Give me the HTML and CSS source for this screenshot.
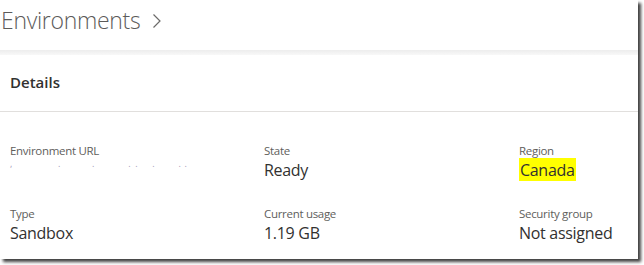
FILE: index.html
```html
<!DOCTYPE html>
<html>
<head>
<meta charset="utf-8">
<link rel="stylesheet" href="styles.css">
</head>
<body>
<div class="frame">
  <header class="header">
    <h1 class="title">Environments<svg class="chev" width="10" height="16" viewBox="0 0 10 16"><polyline points="1.5,1.5 8,8 1.5,14.5" fill="none" stroke="#6b6a69" stroke-width="1.2"/></svg></h1>
  </header>
  <div class="band"></div>
  <section class="card">
    <h2 class="card-title">Details</h2>
    <div class="grid">
      <div class="field">
        <div class="label">Environment URL</div>
        <div class="value redacted"><span class="dot d1">,</span><span class="dot d2">.</span><span class="dot d3">.</span><span class="dot d4">.</span><span class="dot d5">.</span><span class="dot d6">.</span><span class="dot d7">.</span><span class="dot d8">.</span></div>
      </div>
      <div class="field">
        <div class="label">State</div>
        <div class="value">Ready</div>
      </div>
      <div class="field">
        <div class="label">Region</div>
        <div class="value"><span class="hl">Canada</span></div>
      </div>
      <div class="field">
        <div class="label">Type</div>
        <div class="value">Sandbox</div>
      </div>
      <div class="field">
        <div class="label">Current usage</div>
        <div class="value">1.19 GB</div>
      </div>
      <div class="field">
        <div class="label">Security group</div>
        <div class="value">Not assigned</div>
      </div>
    </div>
  </section>
</div>
</body>
</html>
```
FILE: styles.css
```css
html, body {
  margin: 0;
  padding: 0;
  background: #ffffff;
}
body {
  width: 644px;
  height: 265px;
  overflow: hidden;
  font-family: "Open Sans", "Noto Sans", sans-serif;
  color: #323130;
}
.frame {
  width: 638px;
  height: 259px;
  background: #ffffff;
  box-shadow: 3px 3px 3px rgba(0, 0, 0, 0.75);
  overflow: hidden;
}
.header {
  height: 50px;
  padding-left: 1px;
}
.title {
  margin: 0;
  display: flex;
  align-items: center;
  gap: 12px;
  font-weight: 300;
  font-size: 23px;
  line-height: 40px;
  color: #5c5b5a;
  letter-spacing: -0.3px;
}
.chev {
  display: block;
  margin-top: 1px;
}
.band {
  height: 5px;
  background: linear-gradient(#ededed, #f8f8f8);
}
.card {
  padding: 0 10px;
}
.card-title {
  margin: 0 -10px;
  height: 56px;
  line-height: 54px;
  padding-left: 10px;
  font-size: 15px;
  font-weight: 600;
  color: #323130;
  border-bottom: 1px solid #e1dfdd;
}
.grid {
  display: grid;
  grid-template-columns: 254px 255px 1fr;
  row-gap: 25px;
  padding-top: 31px;
}
.field {
  display: flex;
  flex-direction: column;
}
.label {
  font-size: 11.5px;
  line-height: 16px;
  color: #605e5c;
  letter-spacing: -0.3px;
}
.value {
  font-size: 16px;
  line-height: 22px;
  color: #323130;
  letter-spacing: -0.3px;
}
.redacted {
  display: flex;
  align-items: flex-start;
  color: #9f98b8;
  font-size: 9px;
  line-height: 10px;
  height: 22px;
}
.dot { display: block; }
.d2 { margin-left: 46px; }
.d3 { margin-left: 32px; }
.d4 { margin-left: 34px; }
.d5 { margin-left: 5px; }
.d6 { margin-left: 15px; }
.d7 { margin-left: 24px; }
.d8 { margin-left: 4px; }
.hl {
  background: #ffff00;
  padding: 1px 1px 0 1px;
}
```
